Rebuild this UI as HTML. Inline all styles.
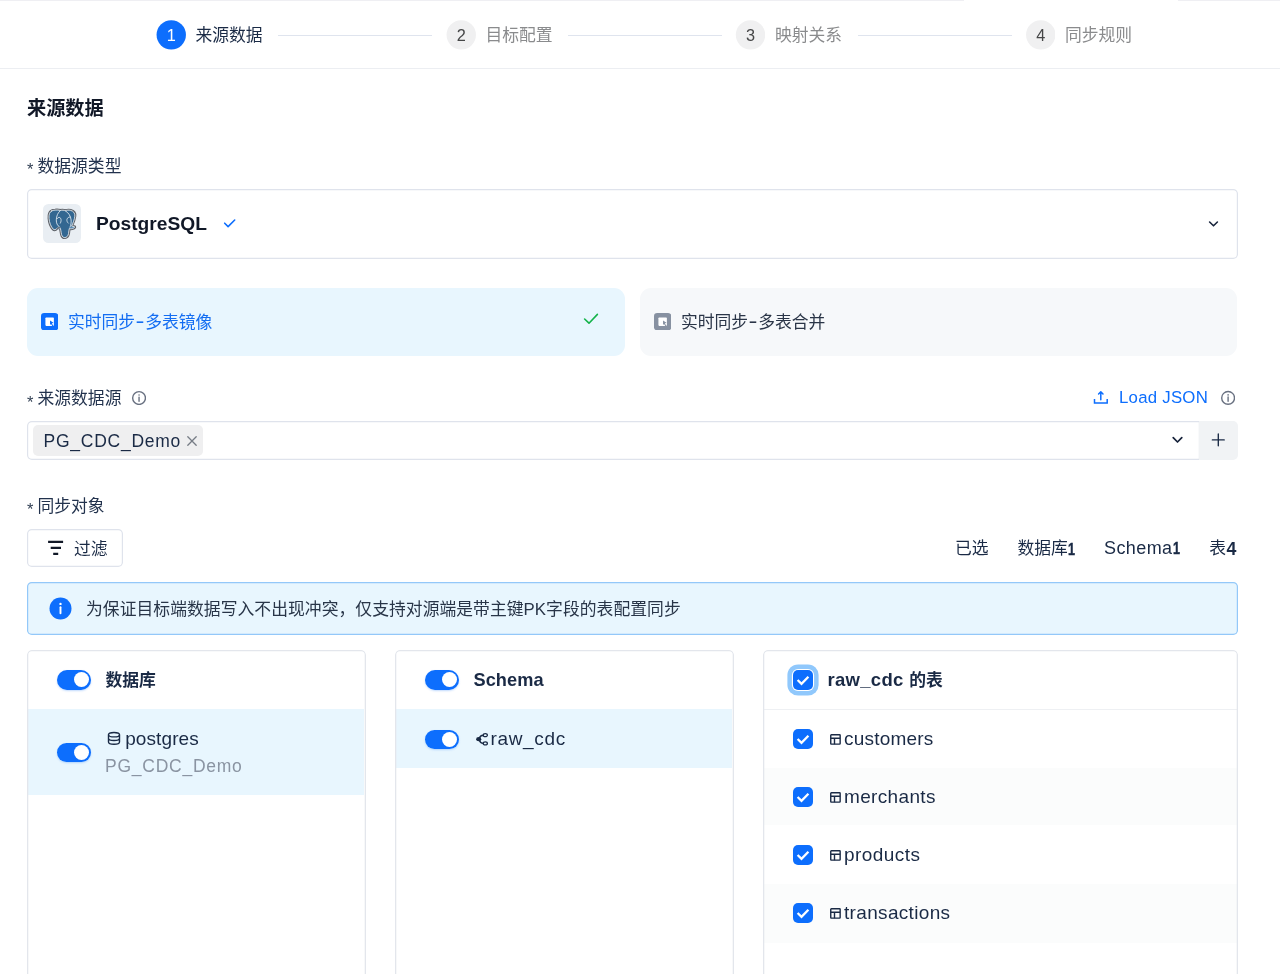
<!DOCTYPE html>
<html lang="zh-CN">
<head>
<meta charset="utf-8">
<title>来源数据</title>
<style>
*{box-sizing:border-box;margin:0;padding:0}
html,body{width:1280px;height:974px;overflow:hidden;background:#fff}
body{position:relative;font-family:"Liberation Sans","Noto Sans CJK SC",sans-serif;font-size:16.8px;color:#1a2a45;-webkit-font-smoothing:antialiased}
#wrap{position:absolute;left:0;top:0;width:1280px;height:974px;overflow:hidden;will-change:transform}
.abs{position:absolute}
.t{position:absolute;white-space:nowrap;line-height:24px;height:24px}
.cjk{font-family:"Liberation Sans","Noto Sans CJK SC",sans-serif}
.t.cjk{margin-top:2px}
.b{font-weight:700}
/* header */
#hdr{position:absolute;left:0;top:0;width:1280px;height:69px;border-bottom:1px solid #eceef2;background:#fff}
.topl{position:absolute;top:0;height:1px;background:#efeff3}
.stepc{position:absolute;z-index:0;top:20px;width:30px;height:30px;color:#454647;font-size:16.300px;line-height:30px;text-align:center}
.stepc svg{position:absolute;left:0;top:0;z-index:-1}
.stepc span{position:relative;top:.2px}
.stepc.on{color:#fff}
.stept{top:22px;font-size:16.8px;color:#8a8b8d}
.stept.on{color:#1a2a45}
.stepl{position:absolute;top:35px;height:1px;background:#dfe4ee}
/* boxes */
.box{position:absolute;border-radius:4.800px;background:#fff;box-shadow:inset 0 0 0 1.200px #dfe3ec}
.ast{position:absolute;left:27px;font-size:16.500px;color:#334155;line-height:24px;height:24px}
.lbl{left:37.5px;color:#22324d}
.card{position:absolute;top:288px;height:67.5px;border-radius:11px}
.tog{position:absolute;width:33.6px;height:19.2px;border-radius:10px;background:#0d6efd;box-shadow:0 1px 2px rgba(13,110,253,.25)}
.tog i{position:absolute;right:2.1px;top:2.1px;width:15px;height:15px;border-radius:50%;background:#fff}
.panel{position:absolute;top:650px;height:340px;border-radius:4.800px;background:#fff;overflow:hidden}
.panel::after{content:"";position:absolute;left:0;top:0;right:0;bottom:0;border-radius:4.800px;box-shadow:inset 0 0 0 1.300px #e3e6ec}
.hl{position:absolute;left:1.200px;right:1.200px;background:#e8f6fe}
.stripe{position:absolute;left:1.200px;right:1.200px;background:#fbfcfc}
.cb{position:absolute;width:20px;height:20px;border-radius:5px;background:#0d6efd}
.cb svg{position:absolute;left:0;top:0}
.row{color:#1a2a45}
.lc{font-size:19px}
.n1{display:inline-block;position:relative;font-family:"Liberation Sans",sans-serif;font-size:16.800px;letter-spacing:0;transform:scaleX(.75);transform-origin:0 50%;margin-right:-2.400px;-webkit-text-stroke:.45px currentColor}
.hy{display:inline-block;width:10.100px;text-align:center;font-family:"Liberation Sans",sans-serif;transform:translateY(-1.600px) scale(1.600,1.250)}
</style>
</head>
<body>
<div id="wrap">

<!-- ===== stepper header ===== -->
<div id="hdr">
  <div class="topl" style="left:0;width:964px"></div>
  <div class="topl" style="left:1178px;width:102px"></div>

  <div class="stepc on" style="left:156px"><svg width="30" height="30" viewBox="0 0 30 30"><circle cx="15.250" cy="14.850" r="14.700" fill="#0d6efd"/></svg><span style="left:0.25px">1</span></div>
  <div class="t stept on cjk" style="left:195.5px">来源数据</div>
  <div class="stepl" style="left:278px;width:154px"></div>

  <div class="stepc" style="left:446px"><svg width="30" height="30" viewBox="0 0 30 30"><circle cx="15.250" cy="14.850" r="14.700" fill="#f0f0f1"/></svg><span style="left:0.25px">2</span></div>
  <div class="t stept cjk" style="left:485.5px">目标配置</div>
  <div class="stepl" style="left:568px;width:154px"></div>

  <div class="stepc" style="left:735px"><svg width="30" height="30" viewBox="0 0 30 30"><circle cx="15.500" cy="14.850" r="14.700" fill="#f0f0f1"/></svg><span style="left:0.50px">3</span></div>
  <div class="t stept cjk" style="left:775px">映射关系</div>
  <div class="stepl" style="left:857.5px;width:154px"></div>

  <div class="stepc" style="left:1025px"><svg width="30" height="30" viewBox="0 0 30 30"><circle cx="15.750" cy="14.850" r="14.700" fill="#f0f0f1"/></svg><span style="left:0.75px">4</span></div>
  <div class="t stept cjk" style="left:1065px">同步规则</div>
</div>

<!-- ===== title ===== -->
<div class="t cjk" style="left:27px;top:92.500px;font-size:19.200px;font-weight:600;line-height:28px;height:28px;color:#111827">来源数据</div>

<!-- ===== datasource type ===== -->
<div class="ast" style="top:157px">*</div>
<div class="t lbl cjk" style="top:152.500px">数据源类型</div>

<div class="box" style="left:27px;top:189px;width:1210.500px;height:69.500px"></div>
<div class="abs" style="left:42.600px;top:204.400px;width:38.700px;height:38.900px;border-radius:5.500px;background:#e9eef3"></div>
<svg class="abs" style="left:38px;top:200px" width="48" height="48" viewBox="0 0 974 974">
  <!-- PostgreSQL elephant (approximation) -->
  <g stroke-linejoin="round" stroke-linecap="round" transform="translate(485 485) scale(.955) translate(-485 -485)">
    <path id="eleph" d="M262 212C222 232 206 290 212 370C218 450 250 545 300 596C322 616 352 610 378 582C398 560 420 552 446 560C462 600 466 660 478 712C490 760 520 778 548 776C586 772 616 744 626 690C632 650 634 610 642 584C664 590 700 590 730 576C752 566 764 552 752 544C734 534 708 540 690 532C722 470 752 390 760 320C766 262 730 212 672 198C630 188 592 192 560 204C528 194 490 190 452 200C420 190 380 188 340 192C310 194 284 200 262 212Z" fill="#336791" stroke="#5c6067" stroke-width="62"/>
    <path d="M262 212C222 232 206 290 212 370C218 450 250 545 300 596C322 616 352 610 378 582C398 560 420 552 446 560C462 600 466 660 478 712C490 760 520 778 548 776C586 772 616 744 626 690C632 650 634 610 642 584C664 590 700 590 730 576C752 566 764 552 752 544C734 534 708 540 690 532C722 470 752 390 760 320C766 262 730 212 672 198C630 188 592 192 560 204C528 194 490 190 452 200C420 190 380 188 340 192C310 194 284 200 262 212Z" fill="#336791" stroke="#f4f7fa" stroke-width="17"/>
    <path d="M452 204C400 240 368 320 366 400C364 470 390 520 430 548" fill="none" stroke="#f0f5fa" stroke-width="17"/>
    <path d="M560 208C630 250 672 320 680 400C686 460 676 510 660 548" fill="none" stroke="#f0f5fa" stroke-width="17"/>
    <path d="M384 372C400 340 440 336 458 366C474 394 470 440 452 470" fill="none" stroke="#f0f5fa" stroke-width="16"/>
    <path d="M660 340C630 336 600 356 592 390C586 420 600 452 622 470" fill="none" stroke="#f0f5fa" stroke-width="16"/>
    <path d="M380 586C400 566 424 556 446 562" fill="none" stroke="#1d2733" stroke-width="14"/>
    <path d="M650 566C680 574 712 570 736 560" fill="none" stroke="#8fb6d8" stroke-width="16"/>
    <path d="M396 596C416 590 436 586 452 580" fill="none" stroke="#8fb6d8" stroke-width="14"/>
  </g>
</svg>
<div class="t b" style="left:96px;top:209.500px;font-size:19.200px;line-height:28px;height:28px;color:#111827">PostgreSQL</div>
<svg class="abs" style="left:223px;top:217px" width="14" height="12" viewBox="0 0 14 12"><path d="M1.700 6.200 5.100 9.600 11.700 3" fill="none" stroke="#0d6efd" stroke-width="1.600" stroke-linecap="round" stroke-linejoin="round"/></svg>
<svg class="abs" style="left:1207px;top:219px" width="13" height="10" viewBox="0 0 13 10"><path d="M2.600 3 6.500 6.800 10.400 3" fill="none" stroke="#17233b" stroke-width="1.600" stroke-linecap="round" stroke-linejoin="round"/></svg>

<!-- ===== mode cards ===== -->
<div class="card" style="left:27px;width:598px;background:#e8f6fe"></div>
<div class="card" style="left:639.500px;width:597.500px;background:#f6f8fa"></div>

<svg class="abs" style="left:41px;top:312.500px" width="17.300" height="17.300" viewBox="0 0 18 18"><rect width="18" height="18" rx="3.300" fill="#0d6efd"/><rect x="4.600" y="4.600" width="8.800" height="8.800" rx=".8" fill="#fff"/><path d="M9.400 7.700 13 10.200 11.300 10.900 12.900 13.200 12 13.800 10.400 11.500 9.400 12.400z" fill="#0d6efd"/></svg>
<div class="t cjk" style="left:68px;top:308.500px;color:#136df2">实时同步<span class="hy">-</span>多表镜像</div>
<svg class="abs" style="left:582px;top:311px" width="18" height="15" viewBox="0 0 18 15"><path d="M2.600 8 7 12.200 15.400 3.400" fill="none" stroke="#14b34a" stroke-width="1.600" stroke-linecap="round" stroke-linejoin="round"/></svg>

<svg class="abs" style="left:653.700px;top:312.500px" width="17.300" height="17.300" viewBox="0 0 18 18"><rect width="18" height="18" rx="3.300" fill="#8791a1"/><rect x="4.600" y="4.600" width="8.800" height="8.800" rx=".8" fill="#fff"/><path d="M9.400 7.700 13 10.200 11.300 10.900 12.900 13.200 12 13.800 10.400 11.500 9.400 12.400z" fill="#8791a1"/></svg>
<div class="t cjk" style="left:681px;top:308.500px;color:#2a3547">实时同步<span class="hy">-</span>多表合并</div>

<!-- ===== source datasource ===== -->
<div class="ast" style="top:390px">*</div>
<div class="t lbl cjk" style="top:385px">来源数据源</div>
<svg class="abs" style="left:131px;top:390px" width="15" height="15" viewBox="-.55 -.5 15 15"><circle cx="7.500" cy="7.500" r="6.400" fill="none" stroke="#687080" stroke-width="1.400"/><path d="M7.500 6.600v4.200" stroke="#687080" stroke-width="1.400" stroke-linecap="round"/><circle cx="7.500" cy="4.500" r=".8" fill="#687080"/></svg>

<svg class="abs" style="left:1092px;top:390px" width="16" height="15" viewBox="-.7 .4 16 15"><path d="M1.800 9.400v3.900h12.700V9.400" fill="none" stroke="#0d6efd" stroke-width="1.500"/><path d="M8.100 10.200V2.400M5.900 4.400 8.100 2.200l2.200 2.200" fill="none" stroke="#0d6efd" stroke-width="1.500" stroke-linejoin="round" stroke-linecap="round"/></svg>
<div class="t" style="left:1119px;top:386.300px;color:#0d6efd;letter-spacing:.25px">Load JSON</div>
<svg class="abs" style="left:1220px;top:390px" width="15" height="15" viewBox="-.6 -.4 15 15"><circle cx="7.500" cy="7.500" r="6.400" fill="none" stroke="#687080" stroke-width="1.400"/><path d="M7.500 6.600v4.200" stroke="#687080" stroke-width="1.400" stroke-linecap="round"/><circle cx="7.500" cy="4.500" r=".8" fill="#687080"/></svg>

<div class="box" style="left:27px;top:421px;width:1173px;height:38.600px;border-radius:5px 0 0 5px"></div>
<div class="abs" style="left:1199px;top:421px;width:38.500px;height:38.600px;background:#f1f3f5;border-radius:0 5px 5px 0"></div>
<div class="abs" style="left:33px;top:425px;width:170px;height:30.800px;border-radius:5px;background:#efeff0"></div>
<div class="t" style="left:43.500px;top:428.500px;font-size:17.500px;letter-spacing:.75px;color:#1a2a45">PG_CDC_Demo</div>
<svg class="abs" style="left:185.500px;top:434.600px" width="12" height="12" viewBox="0 0 12 12"><path d="M1.800 1.800l8.400 8.400M10.200 1.800l-8.400 8.400" stroke="#767c85" stroke-width="1.300" stroke-linecap="round"/></svg>
<svg class="abs" style="left:1170.500px;top:435px" width="13" height="10" viewBox="0 0 13 10"><path d="M2.200 2.600 6.500 7 10.800 2.600" fill="none" stroke="#17233b" stroke-width="1.700" stroke-linecap="round" stroke-linejoin="round"/></svg>
<svg class="abs" style="left:1211px;top:432px;overflow:visible" width="14.600" height="14.600" viewBox="0 -.6 15 15"><path d="M7.500 1.400v12.200M1.400 7.500h12.200" stroke="#1a2a45" stroke-width="1.400" stroke-linecap="round"/></svg>

<!-- ===== sync objects ===== -->
<div class="ast" style="top:497px">*</div>
<div class="t lbl cjk" style="top:492.500px">同步对象</div>

<div class="box" style="left:27px;top:529px;width:96px;height:38.200px"></div>
<svg class="abs" style="left:47px;top:539.500px" width="17" height="16" viewBox="0 0 17 16"><path d="M1.100 1.800h15M3.700 7.800h10.300M6.200 13.900h5" stroke="#111827" stroke-width="2.300"/></svg>
<div class="t cjk" style="left:74px;top:536px">过滤</div>

<div class="t cjk" style="left:955px;top:534.500px">已选</div>
<div class="t cjk" style="left:1017.500px;top:534.500px">数据库<b class="n1" style="top:1px">1</b></div>
<div class="t" style="left:1104px;top:535.500px;font-size:18px;letter-spacing:.42px">Schema<b class="n1">1</b></div>
<div class="t cjk" style="left:1209.200px;top:533.500px">表<b style="font-family:'Liberation Sans',sans-serif;font-size:17.800px;position:relative;top:1px;margin-left:.5px">4</b></div>

<!-- ===== alert ===== -->
<div class="abs" style="left:27px;top:582px;width:1210.500px;height:53px;border-radius:4.800px;background:#e8f6fe;box-shadow:inset 0 0 0 1.200px #93c8f9"></div>
<svg class="abs" style="left:49px;top:597px;overflow:visible" width="22" height="22" viewBox="-.5 -.5 22 22"><circle cx="11" cy="11" r="11" fill="#0d6efd"/><path d="M11 9.800v6" stroke="#fff" stroke-width="1.900" stroke-linecap="round"/><circle cx="11" cy="6.400" r="1.200" fill="#fff"/></svg>
<div class="t cjk" style="left:86px;top:595.500px;color:#283548;letter-spacing:.05px">为保证目标端数据写入不出现冲突，仅支持对源端是带主键PK字段的表配置同步</div>

<!-- ===== panels ===== -->
<div class="panel" style="left:27px;width:338.500px">
  <div class="hl" style="top:59.400px;height:85.400px"></div>
</div>
<div class="tog" style="left:57px;top:670.400px"><i></i></div>
<div class="t b cjk" style="left:105.500px;top:667px">数据库</div>
<div class="tog" style="left:57px;top:742.500px"><i></i></div>
<svg class="abs" style="left:106.800px;top:731.200px" width="14" height="15" viewBox="0 0 14 15"><g fill="none" stroke="#1a2a45" stroke-width="1.400"><ellipse cx="7" cy="3.700" rx="5.500" ry="2.200"/><path d="M1.500 3.700v7.400c0 1.220 2.460 2.200 5.500 2.200s5.500-.98 5.500-2.200V3.700M1.500 7.300c0 1.220 2.460 2.200 5.500 2.200s5.500-.98 5.500-2.200"/></g></svg>
<div class="t row lc" style="left:125.200px;top:726.500px;letter-spacing:.1px">postgres</div>
<div class="t" style="left:105px;top:753.800px;font-size:17.500px;letter-spacing:.75px;color:#8a94a2">PG_CDC_Demo</div>

<div class="panel" style="left:395px;width:338.500px">
  <div class="hl" style="top:59.400px;height:58.400px"></div>
</div>
<div class="tog" style="left:425.300px;top:670.400px"><i></i></div>
<div class="t b" style="left:473.500px;top:668px;font-size:18.200px;letter-spacing:.05px">Schema</div>
<div class="tog" style="left:425.300px;top:729.800px"><i></i></div>
<svg class="abs" style="left:475px;top:732px" width="14" height="15" viewBox="0 0 14 15"><ellipse cx="3.700" cy="7.200" rx="2.600" ry="2.100" fill="#1a2a45"/><path d="M4.200 6.600C4.800 4.400 6 3.300 8.200 3.200M4.200 7.800C4.800 10 6 11.300 8.200 11.400" stroke="#1a2a45" stroke-width="1.400" fill="none"/><ellipse cx="10.300" cy="3.200" rx="2.050" ry="1.500" fill="none" stroke="#1a2a45" stroke-width="1.300"/><ellipse cx="10.300" cy="11.400" rx="2.050" ry="1.500" fill="none" stroke="#1a2a45" stroke-width="1.300"/></svg>
<div class="t row lc" style="left:490.500px;top:726.500px;letter-spacing:.65px">raw_cdc</div>

<div class="panel" style="left:763.300px;width:474.500px">
  <div class="abs" style="left:0;right:0;top:58.700px;height:1.200px;background:#eef0f3"></div>
  <div class="stripe" style="top:117.600px;height:57.900px"></div>
  <div class="stripe" style="top:234px;height:58.500px"></div>
</div>
<div class="cb" style="left:793px;top:670px;box-shadow:0 0 0 1.100px #fff,0 0 0 5.600px #90c8fc"><svg width="20" height="20" viewBox="0 0 20 20"><path d="M4.600 10 8.500 13.900 15.400 6.800" fill="none" stroke="#fff" stroke-width="2.300"/></svg></div>
<div class="t b" style="left:827.500px;top:667.500px"><span style="font-size:18.500px;letter-spacing:.3px">raw_cdc</span> <span class="cjk" style="margin-left:1px">的表</span></div>

<div class="cb" style="left:793px;top:729px"><svg width="20" height="20" viewBox="0 0 20 20"><path d="M4.600 10 8.500 13.900 15.400 6.800" fill="none" stroke="#fff" stroke-width="2.300"/></svg></div>
<svg class="abs" style="left:830px;top:734px" width="11" height="11" viewBox="0 0 11 11"><rect x=".75" y=".75" width="9.400" height="9.400" rx=".6" fill="none" stroke="#1a2a45" stroke-width="1.400"/><path d="M.75 4.300h9.400M4.500 4.300v5.850" stroke="#1a2a45" stroke-width="1.400" fill="none"/></svg>
<div class="t row lc" style="left:844px;top:726.5px;letter-spacing:0.2px">customers</div>

<div class="cb" style="left:793px;top:787px"><svg width="20" height="20" viewBox="0 0 20 20"><path d="M4.600 10 8.500 13.900 15.400 6.800" fill="none" stroke="#fff" stroke-width="2.300"/></svg></div>
<svg class="abs" style="left:830px;top:792px" width="11" height="11" viewBox="0 0 11 11"><rect x=".75" y=".75" width="9.400" height="9.400" rx=".6" fill="none" stroke="#1a2a45" stroke-width="1.400"/><path d="M.75 4.300h9.400M4.500 4.300v5.850" stroke="#1a2a45" stroke-width="1.400" fill="none"/></svg>
<div class="t row lc" style="left:844px;top:784.5px;letter-spacing:0.35px">merchants</div>

<div class="cb" style="left:793px;top:845px"><svg width="20" height="20" viewBox="0 0 20 20"><path d="M4.600 10 8.500 13.900 15.400 6.800" fill="none" stroke="#fff" stroke-width="2.300"/></svg></div>
<svg class="abs" style="left:830px;top:850px" width="11" height="11" viewBox="0 0 11 11"><rect x=".75" y=".75" width="9.400" height="9.400" rx=".6" fill="none" stroke="#1a2a45" stroke-width="1.400"/><path d="M.75 4.300h9.400M4.500 4.300v5.850" stroke="#1a2a45" stroke-width="1.400" fill="none"/></svg>
<div class="t row lc" style="left:844px;top:842.5px;letter-spacing:0.45px">products</div>

<div class="cb" style="left:793px;top:903px"><svg width="20" height="20" viewBox="0 0 20 20"><path d="M4.600 10 8.500 13.900 15.400 6.800" fill="none" stroke="#fff" stroke-width="2.300"/></svg></div>
<svg class="abs" style="left:830px;top:908px" width="11" height="11" viewBox="0 0 11 11"><rect x=".75" y=".75" width="9.400" height="9.400" rx=".6" fill="none" stroke="#1a2a45" stroke-width="1.400"/><path d="M.75 4.300h9.400M4.500 4.300v5.850" stroke="#1a2a45" stroke-width="1.400" fill="none"/></svg>
<div class="t row lc" style="left:844px;top:900.5px;letter-spacing:0.33px">transactions</div>

</div>
</body>
</html>
